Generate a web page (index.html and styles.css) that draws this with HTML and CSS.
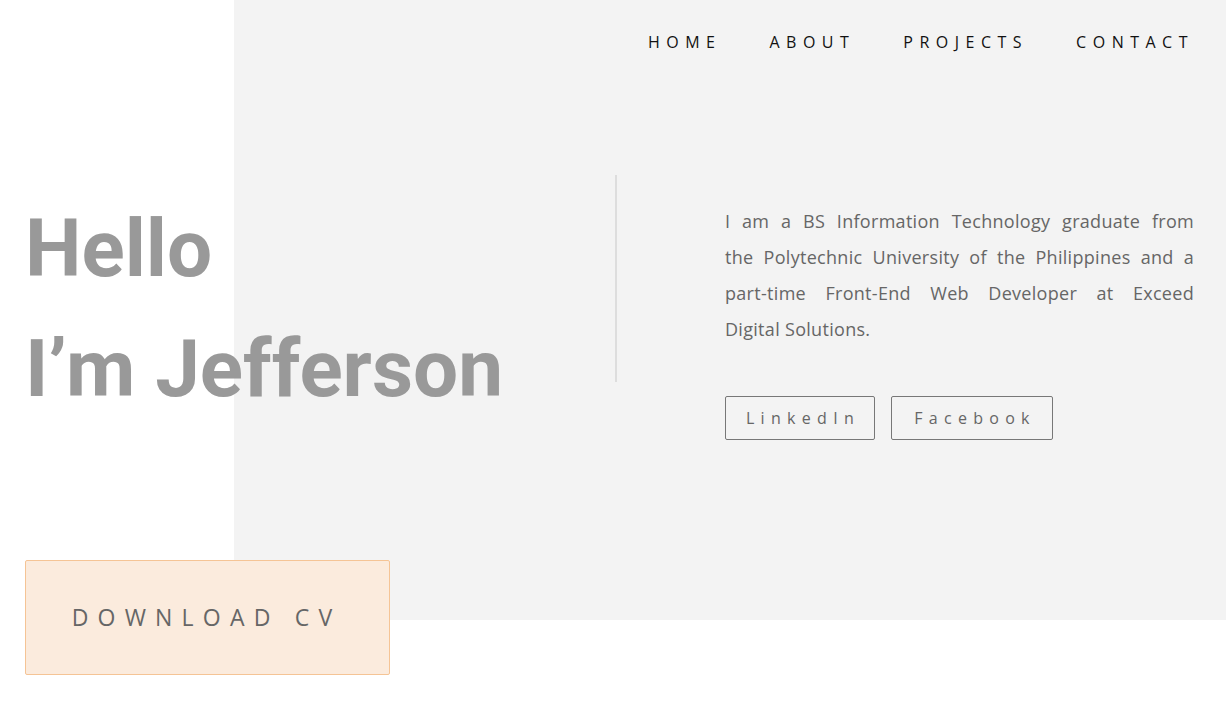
FILE: index.html
```html
<!DOCTYPE html>
<html lang="en">
<head>
<meta charset="utf-8">
<title>Jefferson</title>
<link rel="stylesheet" href="styles.css">
</head>
<body>
<div class="page">
  <header class="topbar">
    <nav class="nav">
      <a href="#" class="nav-link">HOME</a>
      <a href="#" class="nav-link">ABOUT</a>
      <a href="#" class="nav-link">PROJECTS</a>
      <a href="#" class="nav-link">CONTACT</a>
    </nav>
  </header>
  <main class="hero">
    <div class="hero-left">
      <h1 class="title">Hello<br>I’m Jefferson</h1>
      <a href="#" class="cv-btn">DOWNLOAD CV</a>
    </div>
    <div class="divider"></div>
    <div class="hero-right">
      <p class="intro"><span class="line">I am a BS Information Technology graduate from</span> <span class="line">the Polytechnic University of the Philippines and a</span> <span class="line">part-time Front-End Web Developer at Exceed</span> <span class="line line-last">Digital Solutions.</span></p>
      <div class="socials">
        <a href="#" class="social-btn social-li">LinkedIn</a>
        <a href="#" class="social-btn social-fb">Facebook</a>
      </div>
    </div>
  </main>
</div>
</body>
</html>
```
FILE: styles.css
```css
* { box-sizing: border-box; }
html, body { margin: 0; padding: 0; }
body {
  font-family: "Open Sans", "Noto Sans", sans-serif;
  background: #fff;
}
.page {
  width: 1226px;
  height: 705px;
  overflow: hidden;
  background: linear-gradient(to right, #fff 234px, #f3f3f3 234px) no-repeat;
  background-size: 100% 620px;
}
a { text-decoration: none; }
.topbar {
  height: 84px;
  display: flex;
  justify-content: flex-end;
  align-items: center;
  padding-right: 32px;
}
.nav { display: flex; gap: 48px; }
.nav-link {
  color: #111;
  font-size: 16px;
  letter-spacing: 6.5px;
  line-height: 20px;
}
.hero {
  display: flex;
  align-items: flex-start;
  margin-top: 91px;
}
.hero-left {
  width: 615px;
  padding-left: 25px;
  display: flex;
  flex-direction: column;
  align-items: flex-start;
}
.title {
  margin: 14px 0 0;
  font-family: Roboto, "Liberation Sans", sans-serif;
  font-weight: 700;
  font-size: 80px;
  line-height: 120px;
  color: #999;
  letter-spacing: 0;
  white-space: nowrap;
}
.cv-btn {
  margin-top: 131px;
  width: 365px;
  height: 115px;
  display: flex;
  align-items: center;
  justify-content: center;
  padding-right: 2px;
  padding-bottom: 2px;
  background: #fbebdd;
  border: 1px solid #f5c495;
  border-radius: 2px;
  color: #666;
  font-size: 23px;
  letter-spacing: 9.2px;
}
.divider {
  width: 2px;
  height: 207px;
  background: #ddd;
}
.hero-right {
  margin-left: 108px;
  width: 469px;
  margin-top: 28px;
}
.intro {
  margin: 0;
  font-size: 18px;
  line-height: 36px;
  color: #666;
  letter-spacing: 0.3px;
}
.line {
  display: block;
  text-align: justify;
  text-align-last: justify;
  white-space: nowrap;
}
.line-last { text-align-last: left; }
.socials {
  display: flex;
  gap: 16px;
  margin-top: 49px;
}
.social-btn {
  height: 44px;
  display: flex;
  align-items: center;
  justify-content: center;
  padding-left: 6px;
  border: 1px solid #777;
  border-radius: 2px;
  color: #666;
  font-size: 16px;
  letter-spacing: 6.3px;
}
.social-li { width: 150px; }
.social-fb { width: 162px; }
```
